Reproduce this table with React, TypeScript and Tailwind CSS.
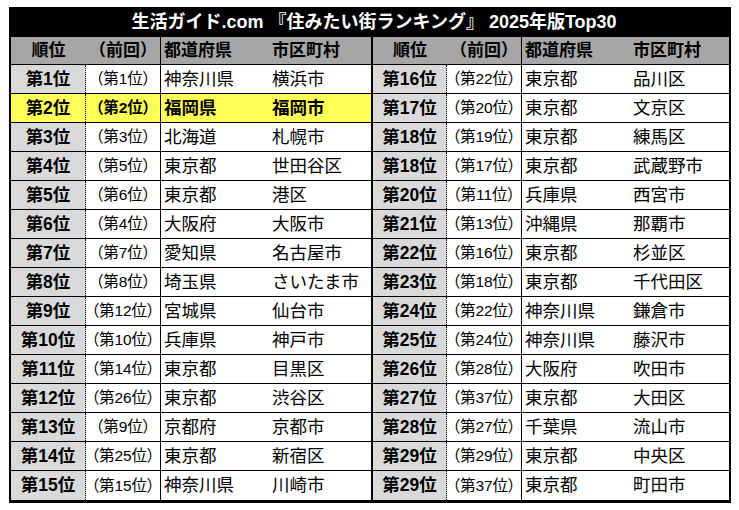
type Row = { rank: string; prev: string; pref: string; city: string; hi?: boolean }

const left: Row[] = [
  { rank: '第1位', prev: '（第1位）', pref: '神奈川県', city: '横浜市' },
  { rank: '第2位', prev: '（第2位）', pref: '福岡県', city: '福岡市', hi: true },
  { rank: '第3位', prev: '（第3位）', pref: '北海道', city: '札幌市' },
  { rank: '第4位', prev: '（第5位）', pref: '東京都', city: '世田谷区' },
  { rank: '第5位', prev: '（第6位）', pref: '東京都', city: '港区' },
  { rank: '第6位', prev: '（第4位）', pref: '大阪府', city: '大阪市' },
  { rank: '第7位', prev: '（第7位）', pref: '愛知県', city: '名古屋市' },
  { rank: '第8位', prev: '（第8位）', pref: '埼玉県', city: 'さいたま市' },
  { rank: '第9位', prev: '（第12位）', pref: '宮城県', city: '仙台市' },
  { rank: '第10位', prev: '（第10位）', pref: '兵庫県', city: '神戸市' },
  { rank: '第11位', prev: '（第14位）', pref: '東京都', city: '目黒区' },
  { rank: '第12位', prev: '（第26位）', pref: '東京都', city: '渋谷区' },
  { rank: '第13位', prev: '（第9位）', pref: '京都府', city: '京都市' },
  { rank: '第14位', prev: '（第25位）', pref: '東京都', city: '新宿区' },
  { rank: '第15位', prev: '（第15位）', pref: '神奈川県', city: '川崎市' },
]

const right: Row[] = [
  { rank: '第16位', prev: '（第22位）', pref: '東京都', city: '品川区' },
  { rank: '第17位', prev: '（第20位）', pref: '東京都', city: '文京区' },
  { rank: '第18位', prev: '（第19位）', pref: '東京都', city: '練馬区' },
  { rank: '第18位', prev: '（第17位）', pref: '東京都', city: '武蔵野市' },
  { rank: '第20位', prev: '（第11位）', pref: '兵庫県', city: '西宮市' },
  { rank: '第21位', prev: '（第13位）', pref: '沖縄県', city: '那覇市' },
  { rank: '第22位', prev: '（第16位）', pref: '東京都', city: '杉並区' },
  { rank: '第23位', prev: '（第18位）', pref: '東京都', city: '千代田区' },
  { rank: '第24位', prev: '（第22位）', pref: '神奈川県', city: '鎌倉市' },
  { rank: '第25位', prev: '（第24位）', pref: '神奈川県', city: '藤沢市' },
  { rank: '第26位', prev: '（第28位）', pref: '大阪府', city: '吹田市' },
  { rank: '第27位', prev: '（第37位）', pref: '東京都', city: '大田区' },
  { rank: '第28位', prev: '（第27位）', pref: '千葉県', city: '流山市' },
  { rank: '第29位', prev: '（第29位）', pref: '東京都', city: '中央区' },
  { rank: '第29位', prev: '（第37位）', pref: '東京都', city: '町田市' },
]

function Header({ rankW }: { rankW: string }) {
  return (
    <div className="flex h-full bg-[#a6a6a6] font-bold text-[17px]">
      <div className={`${rankW} flex items-center justify-center`}>順位</div>
      <div className="w-[75px] flex items-center justify-center border-r border-black">（前回）</div>
      <div className="w-[106px] flex items-center pl-[3px]">都道府県</div>
      <div className="flex-1 flex items-center pl-[5px]">市区町村</div>
    </div>
  )
}

function Cells({ r, rankW }: { r: Row; rankW: string }) {
  const bg = r.hi ? 'bg-[#ffff55]' : 'bg-white'
  return (
    <div className={`flex h-full ${bg} ${r.hi ? 'font-bold' : ''}`}>
      <div
        className={`${rankW} flex items-center justify-center border-r border-dotted border-black font-bold text-[17.5px] ${
          r.hi ? '' : 'bg-[#d9d9d9]'
        }`}
      >
        {r.rank}
      </div>
      <div className="w-[75px] flex items-center justify-center border-r border-black text-[15.5px] [font-feature-settings:'palt']">
        {r.prev}
      </div>
      <div className="w-[106px] flex items-center pl-[3px] text-[17.5px]">{r.pref}</div>
      <div className="flex-1 flex items-center pl-[5px] text-[17.5px]">{r.city}</div>
    </div>
  )
}

export default function App() {
  return (
    <div className="bg-white w-[739px] h-[510px] pt-[7px] pl-[9px] text-black font-['Liberation_Sans','Noto_Sans_CJK_JP',sans-serif]">
      <div className="w-[722px]">
        <div className="h-[30px] bg-black text-white font-bold text-[18px] flex items-center justify-center pl-[8px]">
          生活ガイド.com 『住みたい街ランキング』 2025年版Top30
        </div>
        <div className="border-l-2 border-r-2 border-b-[3px] border-black">
          <div className="flex h-[28px] border-b border-black">
            <div className="w-[360px]">
              <Header rankW="w-[75px]" />
            </div>
            <div className="flex-1 border-l-2 border-black">
              <Header rankW="w-[74px]" />
            </div>
          </div>
          {left.map((l, i) => (
            <div key={i} className={`flex h-[29px] ${i < left.length - 1 ? 'border-b border-black' : ''}`}>
              <div className="w-[360px]">
                <Cells r={l} rankW="w-[75px]" />
              </div>
              <div className="flex-1 border-l-2 border-black">
                <Cells r={right[i]} rankW="w-[74px]" />
              </div>
            </div>
          ))}
        </div>
      </div>
    </div>
  )
}
